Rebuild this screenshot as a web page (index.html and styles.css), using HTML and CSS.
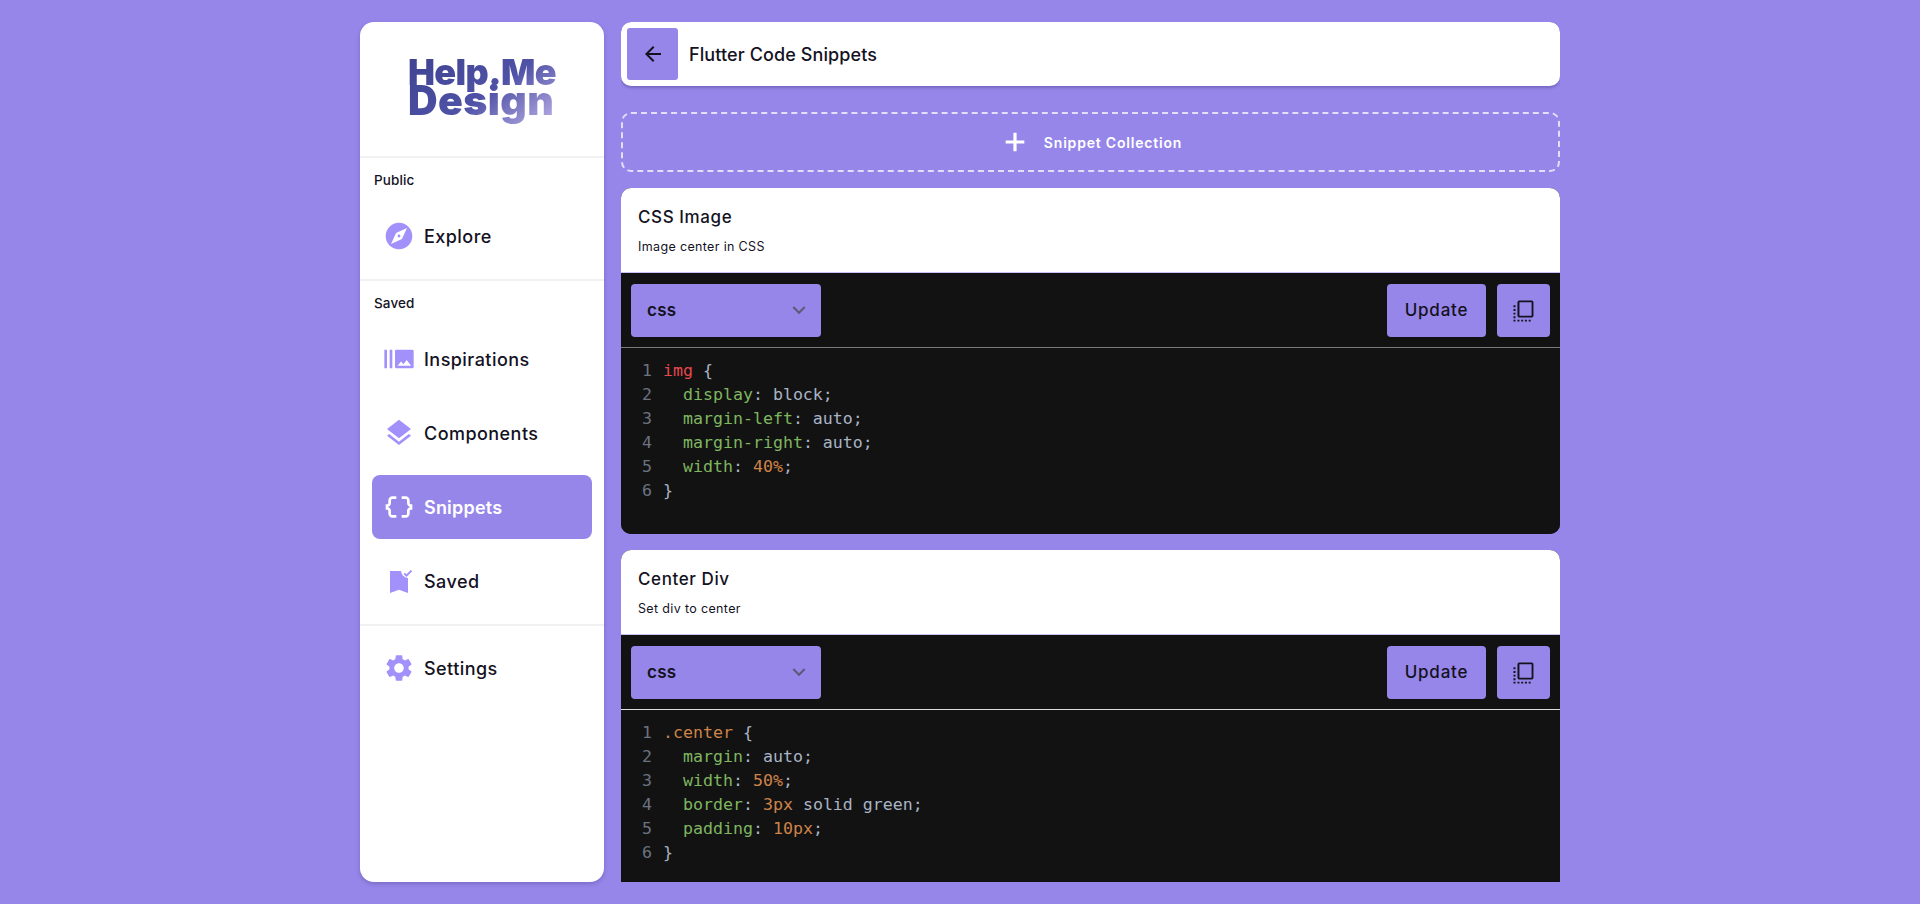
FILE: index.html
```html
<!DOCTYPE html>
<html lang="en">

<head>
    <meta charset="UTF-8">
    <meta name="viewport" content="width=device-width, initial-scale=1.0">
    <title>Flutter Code Snippets</title>
    <link rel="stylesheet" href="styles.css">
</head>

<body>
    <aside class="sidebar">
        <div class="logo">
            <span class="logo-text">Help.Me<br><span class="logo-second">Design</span></span>
        </div>

        <section class="nav-group">
            <p class="nav-label">Public</p>
            <a class="nav-item" href="#">
                <svg class="nav-icon" viewBox="0 0 24 24"><path d="M12 10.9c-.61 0-1.1.49-1.1 1.1s.49 1.1 1.1 1.1c.61 0 1.1-.49 1.1-1.1s-.49-1.1-1.1-1.1zM12 2C6.48 2 2 6.48 2 12s4.48 10 10 10 10-4.48 10-10S17.52 2 12 2zm2.19 12.19L6 18l3.81-8.19L18 6l-3.81 8.19z"/></svg>
                Explore
            </a>
        </section>

        <section class="nav-group">
            <p class="nav-label">Saved</p>
            <a class="nav-item" href="#">
                <svg class="nav-icon" viewBox="0 0 24 24"><path d="M1 5h2v14H1zm4 0h2v14H5zm17 0H10c-.55 0-1 .45-1 1v12c0 .55.45 1 1 1h12c.55 0 1-.45 1-1V6c0-.55-.45-1-1-1zM11 17l2.5-3.15L15.29 16l2.5-3.22L21 17H11z"/></svg>
                Inspirations
            </a>
            <a class="nav-item" href="#">
                <svg class="nav-icon" viewBox="0 0 24 24"><path d="M11.99 18.54l-7.37-5.73L3 14.07l9 7 9-7-1.63-1.27-7.38 5.74zM12 16l7.36-5.73L21 9l-9-7-9 7 1.63 1.27L12 16z"/></svg>
                Components
            </a>
            <a class="nav-item active" href="#">
                <svg class="nav-icon" viewBox="0 0 24 24"><path d="M4 7v2c0 .55-.45 1-1 1H2v4h1c.55 0 1 .45 1 1v2c0 1.65 1.35 3 3 3h3v-2H7c-.55 0-1-.45-1-1v-2c0-1.3-.84-2.42-2-2.83v-.34C5.16 11.42 6 10.3 6 9V7c0-.55.45-1 1-1h3V4H7C5.35 4 4 5.35 4 7zm17 3c-.55 0-1-.45-1-1V7c0-1.65-1.35-3-3-3h-3v2h3c.55 0 1 .45 1 1v2c0 1.3.84 2.42 2 2.83v.34c-1.16.41-2 1.52-2 2.83v2c0 .55-.45 1-1 1h-3v2h3c1.65 0 3-1.35 3-3v-2c0-.55.45-1 1-1h1v-4h-1z"/></svg>
                Snippets
            </a>
            <a class="nav-item" href="#">
                <svg class="nav-icon" viewBox="0 0 24 24"><path d="M17.6 9l-2.200-2.200 1-1 1.200 1.200 3.300-3.300 1 1zM5.250 4.500h8.250c.3 2.800 2.400 4.900 5.250 5.250V21L12 18.500 5.250 21z"/></svg>
                Saved
            </a>
        </section>

        <section class="nav-group nav-last">
            <a class="nav-item" href="#">
                <svg class="nav-icon" viewBox="0 0 24 24"><path d="M19.14 12.94c.04-.3.06-.61.06-.94 0-.32-.02-.64-.07-.94l2.03-1.58c.18-.14.23-.41.12-.61l-1.92-3.32c-.12-.22-.37-.29-.59-.22l-2.39.96c-.5-.38-1.03-.7-1.62-.94l-.36-2.54c-.04-.24-.24-.41-.48-.41h-3.84c-.24 0-.43.17-.47.41l-.36 2.54c-.59.24-1.13.57-1.62.94l-2.39-.96c-.22-.08-.47 0-.59.22L2.74 8.87c-.12.21-.08.47.12.61l2.03 1.58c-.05.3-.09.63-.09.94s.02.64.07.94l-2.03 1.58c-.18.14-.23.41-.12.61l1.92 3.32c.12.22.37.29.59.22l2.39-.96c.5.38 1.03.7 1.62.94l.36 2.54c.05.24.24.41.48.41h3.84c.24 0 .44-.17.47-.41l.36-2.54c.59-.24 1.13-.56 1.62-.94l2.39.96c.22.08.47 0 .59-.22l1.92-3.32c.12-.22.07-.47-.12-.61l-2.01-1.58zM12 15.6c-1.98 0-3.6-1.62-3.6-3.6s1.62-3.6 3.6-3.6 3.6 1.62 3.6 3.6-1.62 3.6-3.6 3.6z"/></svg>
                Settings
            </a>
        </section>
    </aside>

    <main class="content">
        <header class="page-header">
            <button class="back-btn" aria-label="Back">
                <svg viewBox="0 0 24 24"><path d="M20 11H7.83l5.59-5.59L12 4l-8 8 8 8 1.41-1.41L7.83 13H20v-2z"/></svg>
            </button>
            <h1>Flutter Code Snippets</h1>
        </header>

        <button class="add-collection">
            <svg viewBox="0 0 24 24"><path d="M19 13.2h-5.800V19h-2.400v-5.800H5v-2.400h5.800V5h2.400v5.800H19z"/></svg>
            Snippet Collection
        </button>

        <!-- CSS Image -->
        <article class="snippet">
            <div class="snippet-head">
                <h2>CSS Image</h2>
                <p>Image center in CSS</p>
            </div>
            <div class="toolbar">
                <div class="lang-select">css
                    <svg viewBox="0 0 24 24"><path d="M16.59 8.59 12 13.17 7.41 8.59 6 10l6 6 6-6z"/></svg>
                </div>
                <button class="update-btn">Update</button>
                <button class="copy-btn" aria-label="Copy">
                    <svg viewBox="0 0 24 24"><path fill-rule="evenodd" d="M7.900 3h10.700a1.500 1.500 0 0 1 1.500 1.500v11.600a1.500 1.500 0 0 1-1.500 1.500H7.900a1.500 1.500 0 0 1-1.500-1.500V4.500A1.500 1.500 0 0 1 7.900 3zm.2 1.600v11.400h10.400V4.600zM3 7h1.700v1.700H3zm0 3.200h1.700v1.700H3zm0 3.200h1.700v1.700H3zm0 3.200h1.700v1.700H3zm0 2.800h1.700V21H3zm3.400 0h1.700V21H6.400zm3.200 0h1.700V21H9.600zm3.200 0h1.700V21h-1.700zm3.200 0h1.700V21H16z"/></svg>
                </button>
            </div>
<pre class="code"><span class="ln">1</span><span class="sel">img</span> <span class="pun">{</span>
<span class="ln">2</span>  <span class="prop">display</span><span class="pun">: block;</span>
<span class="ln">3</span>  <span class="prop">margin-left</span><span class="pun">: auto;</span>
<span class="ln">4</span>  <span class="prop">margin-right</span><span class="pun">: auto;</span>
<span class="ln">5</span>  <span class="prop">width</span><span class="pun">: </span><span class="num">40%</span><span class="pun">;</span>
<span class="ln">6</span><span class="pun">}</span>
</pre>
        </article>

        <!-- Center Div -->
        <article class="snippet">
            <div class="snippet-head">
                <h2>Center Div</h2>
                <p>Set div to center</p>
            </div>
            <div class="toolbar light-line">
                <div class="lang-select">css
                    <svg viewBox="0 0 24 24"><path d="M16.59 8.59 12 13.17 7.41 8.59 6 10l6 6 6-6z"/></svg>
                </div>
                <button class="update-btn">Update</button>
                <button class="copy-btn" aria-label="Copy">
                    <svg viewBox="0 0 24 24"><path fill-rule="evenodd" d="M7.900 3h10.700a1.500 1.500 0 0 1 1.500 1.500v11.600a1.500 1.500 0 0 1-1.500 1.500H7.900a1.500 1.500 0 0 1-1.500-1.500V4.500A1.500 1.500 0 0 1 7.900 3zm.2 1.600v11.400h10.400V4.600zM3 7h1.700v1.700H3zm0 3.200h1.700v1.700H3zm0 3.200h1.700v1.700H3zm0 3.200h1.700v1.700H3zm0 2.800h1.700V21H3zm3.400 0h1.700V21H6.400zm3.200 0h1.700V21H9.600zm3.200 0h1.700V21h-1.700zm3.200 0h1.700V21H16z"/></svg>
                </button>
            </div>
<pre class="code"><span class="ln">1</span><span class="num">.center</span> <span class="pun">{</span>
<span class="ln">2</span>  <span class="prop">margin</span><span class="pun">: auto;</span>
<span class="ln">3</span>  <span class="prop">width</span><span class="pun">: </span><span class="num">50%</span><span class="pun">;</span>
<span class="ln">4</span>  <span class="prop">border</span><span class="pun">: </span><span class="num">3px</span><span class="pun"> solid green;</span>
<span class="ln">5</span>  <span class="prop">padding</span><span class="pun">: </span><span class="num">10px</span><span class="pun">;</span>
<span class="ln">6</span><span class="pun">}</span>
</pre>
        </article>
    </main>
</body>

</html>
```

FILE: styles.css
```css
* {
    box-sizing: border-box;
}

html,
body {
    height: 100%;
    margin: 0;
}

body {
    display: flex;
    justify-content: center;
    gap: 17px;
    padding: 22px 0;
    overflow: hidden;
    background-color: #9686e9;
    color: #14121f;
    font-family: Inter, "Noto Sans", sans-serif;
}

/* Sidebar */
.sidebar {
    width: 244px;
    flex-shrink: 0;
    background-color: #fff;
    border-radius: 14px;
    box-shadow: 0 2px 4px rgba(40, 30, 100, 0.25);
}

.logo {
    height: 134px;
    display: flex;
    justify-content: center;
    padding-top: 36px;
}

.logo-text {
    display: block;
    height: 72px;
    font-size: 36px;
    font-weight: 900;
    line-height: 28px;
    letter-spacing: -0.6px;
    background: linear-gradient(145deg, #3f4391 0%, #4f52a6 52%, #c6b9ee 100%);
    -webkit-background-clip: text;
    background-clip: text;
    color: transparent;
}

.logo-second {
    font-size: 41px;
    letter-spacing: 0.4px;
}

.nav-group {
    border-top: 2px solid #f1f1f3;
    padding: 10px 12px 11px;
}

.nav-last {
    padding-top: 10px;
}

.nav-label {
    margin: 0 0 12px 2px;
    height: 24px;
    font-size: 13.5px;
    font-weight: 500;
    letter-spacing: 0.1px;
    line-height: 24px;
}

.nav-item {
    display: flex;
    align-items: center;
    gap: 9px;
    height: 64px;
    padding-left: 11px;
    border-radius: 8px;
    color: #14121f;
    font-size: 18px;
    font-weight: 500;
    letter-spacing: 0.45px;
    text-decoration: none;
}

.nav-item+.nav-item {
    margin-top: 10px;
}

.nav-icon {
    width: 32px;
    height: 32px;
    fill: #a391fb;
}

.nav-item.active {
    background-color: #9686e9;
    color: #fff;
    font-weight: 600;
    letter-spacing: 0.2px;
}

.nav-item.active .nav-icon {
    fill: #fff;
}

/* Main column */
.content {
    width: 939px;
    flex-shrink: 0;
    display: flex;
    flex-direction: column;
    overflow: hidden;
    border-radius: 10px 10px 0 0;
}

.page-header {
    flex-shrink: 0;
    height: 64px;
    display: flex;
    align-items: center;
    gap: 11px;
    padding-left: 6px;
    background-color: #fff;
    border-radius: 10px;
    box-shadow: 0 2px 3px rgba(40, 30, 100, 0.3);
}

.back-btn {
    width: 51px;
    height: 52px;
    display: flex;
    align-items: center;
    justify-content: center;
    padding: 0;
    border: none;
    border-radius: 3px;
    background-color: #9686e9;
}

.back-btn svg {
    width: 24px;
    height: 24px;
    fill: #14121f;
}

.page-header h1 {
    margin: 0;
    font-size: 18px;
    font-weight: 500;
    letter-spacing: 0.1px;
}

.add-collection {
    flex-shrink: 0;
    height: 60px;
    margin: 26px 0 16px;
    display: flex;
    align-items: center;
    justify-content: center;
    gap: 13px;
    border: 2px dashed #e4dff9;
    border-radius: 10px;
    background: none;
    color: #fff;
    font-family: inherit;
    font-size: 14px;
    font-weight: 600;
    letter-spacing: 0.8px;
}

.add-collection svg {
    width: 32px;
    height: 32px;
    fill: #fff;
}

/* Snippet cards */
.snippet {
    flex-shrink: 0;
    margin-bottom: 16px;
    overflow: hidden;
    border-radius: 10px;
    background-color: #121212;
}

.snippet-head {
    height: 85px;
    padding: 17px 17px 0;
    background-color: #fff;
    border-bottom: 1px solid #c9c0f4;
}

.snippet-head h2 {
    margin: 0;
    height: 24px;
    font-size: 17px;
    font-weight: 500;
    letter-spacing: 0.6px;
    line-height: 24px;
}

.snippet-head p {
    margin: 9px 0 0;
    font-size: 12.5px;
    letter-spacing: 0.35px;
    line-height: 18px;
}

.toolbar {
    height: 75px;
    display: flex;
    gap: 11px;
    padding: 10px 10px 0;
    border-top: 1px solid #121212;
    background-color: #121212;
    position: relative;
}

.toolbar::after {
    content: "";
    position: absolute;
    left: 0;
    right: 0;
    bottom: 0;
    height: 1px;
    background-color: #7a7a7a;
}

.light-line::after {
    background-color: #dcdcdc;
}

.lang-select {
    width: 190px;
    height: 53px;
    margin-right: auto;
    display: flex;
    align-items: center;
    justify-content: space-between;
    padding: 0 9px 2px 16px;
    border-radius: 4px;
    background-color: #9686e9;
    font-size: 17px;
    font-weight: 600;
    letter-spacing: 0.3px;
}

.lang-select svg {
    width: 26px;
    height: 26px;
    fill: #5f5a78;
}

.update-btn,
.copy-btn {
    height: 53px;
    border: none;
    border-radius: 4px;
    background-color: #9686e9;
    color: #14121f;
    font-family: inherit;
}

.update-btn {
    width: 99px;
    padding: 0 0 2px;
    font-size: 17px;
    font-weight: 500;
    letter-spacing: 0.8px;
}

.copy-btn {
    width: 53px;
    display: flex;
    align-items: center;
    justify-content: center;
    padding: 0;
}

.copy-btn svg {
    width: 28px;
    height: 28px;
    fill: #14121f;
}

.code {
    height: 186px;
    margin: 0;
    padding: 11px 0 0 14px;
    background-color: #121212;
    color: #a9b4c6;
    font-family: "DejaVu Sans Mono", "Liberation Mono", monospace;
    font-size: 16.6px;
    line-height: 24px;
}

.ln {
    display: inline-block;
    width: 28px;
    padding-left: 7px;
    color: #6b7280;
}

.sel {
    color: #e5484d;
}

.prop {
    color: #7fb660;
}

.num {
    color: #cf8349;
}

.pun {
    color: #a9b4c6;
}
```
